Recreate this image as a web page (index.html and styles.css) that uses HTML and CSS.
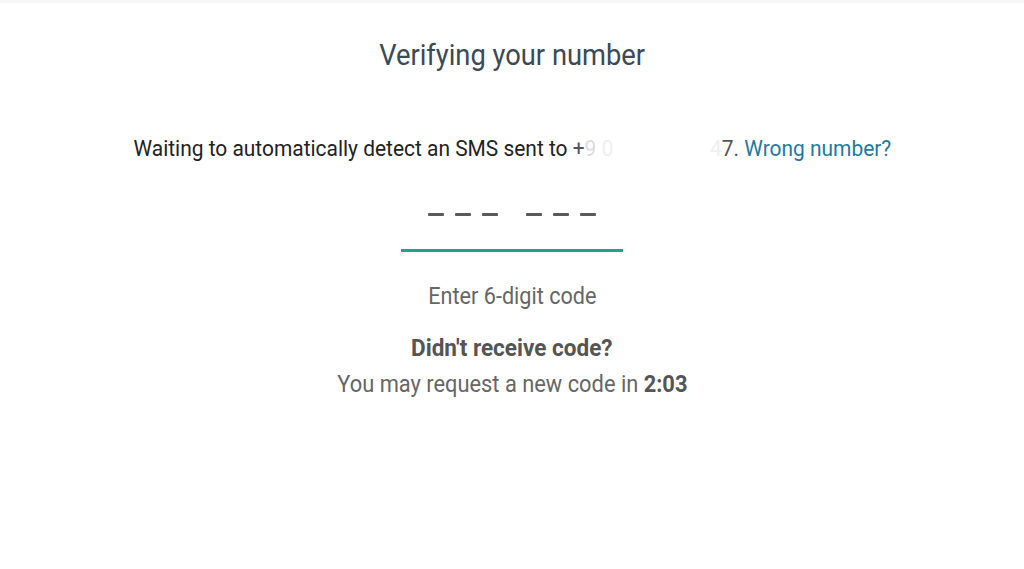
FILE: index.html
```html
<!DOCTYPE html>
<html lang="en">
<head>
    <meta charset="UTF-8">
    <meta name="viewport" content="width=device-width, initial-scale=1.0">
    <title>Verifying your number</title>
    <link rel="stylesheet" href="styles.css">
</head>
<body>
    <main class="verify">
        <h1 class="title">Verifying your number</h1>

        <p class="waiting">
            Waiting to automatically detect an SMS sent to
            <span class="phone">+<span class="hidden">9</span> <span class="hidden faint">0</span><span class="gap"></span><span class="hidden faint">4</span>7.</span>
            <a href="#" class="wrong">Wrong number?</a>
        </p>

        <div class="code-box">
            <div class="dashes">
                <div class="group">
                    <span class="dash"></span>
                    <span class="dash"></span>
                    <span class="dash"></span>
                </div>
                <div class="group">
                    <span class="dash"></span>
                    <span class="dash"></span>
                    <span class="dash"></span>
                </div>
            </div>
            <div class="underline"></div>
        </div>

        <p class="hint">Enter 6-digit code</p>

        <p class="resend-title">Didn't receive code?</p>
        <p class="resend">You may request a new code in <b>2:03</b></p>
    </main>
</body>
</html>
```

FILE: styles.css
```css
body {
    margin: 0;
    font-family: Roboto, "Liberation Sans", sans-serif;
    background: #fff;
    border-top: 3px solid #f6f6f6;
}
.verify {
    display: flex;
    flex-direction: column;
    align-items: center;
}
.title {
    margin: 34px 0 0;
    font-size: 30px;
    font-weight: 400;
    color: #3b4a54;
    transform: scaleX(0.91);
}
.waiting {
    margin: 63px 0 0;
    font-size: 22.5px;
    color: #222;
    transform: scaleX(0.93);
    white-space: nowrap;
}
.phone {
    color: #555;
}
.hidden {
    color: #dcdcdc;
}
.faint {
    color: #efefef;
}
.gap {
    display: inline-block;
    width: 104px;
}
.wrong {
    color: #1f7a9c;
    text-decoration: none;
}
.code-box {
    margin-top: 52px;
    width: 222px;
    display: flex;
    flex-direction: column;
    align-items: center;
}
.dashes {
    display: flex;
    gap: 28px;
}
.group {
    display: flex;
    gap: 11px;
}
.dash {
    width: 16px;
    height: 3px;
    background: #5a5a5a;
    border-radius: 1px;
}
.underline {
    margin-top: 33px;
    width: 100%;
    height: 3px;
    background: #20a386;
}
.hint {
    margin: 30px 0 0;
    font-size: 23.5px;
    color: #666;
    transform: scaleX(0.92);
}
.resend-title {
    margin: 25px 0 0;
    font-size: 23px;
    font-weight: 700;
    color: #555;
    transform: scaleX(0.98);
}
.resend {
    margin: 8px 0 0;
    font-size: 24px;
    color: #666;
    transform: scaleX(0.91);
}
.resend b {
    color: #555;
}
```
